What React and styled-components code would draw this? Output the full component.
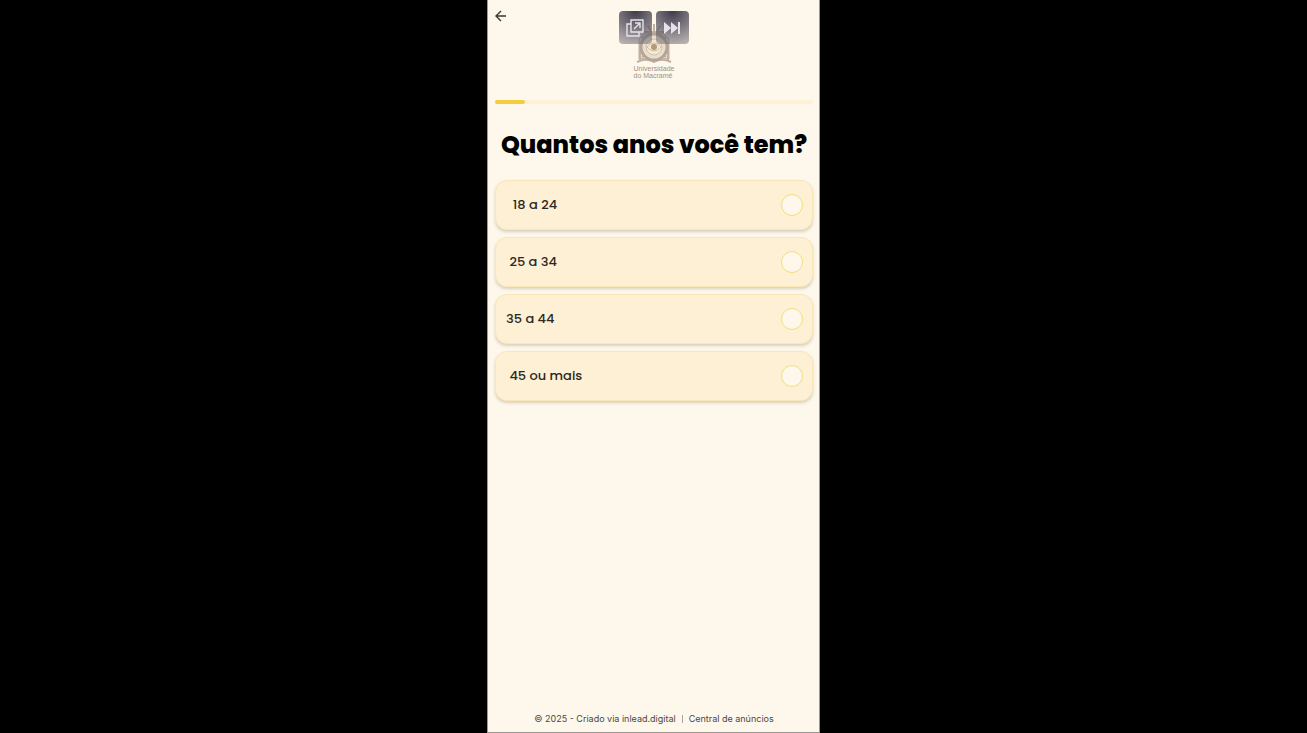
import React, { useState } from 'react';
import styled, { createGlobalStyle } from "styled-components"

const options = [
    { id: "18-24", label: "\u00a0\u00a018 a 24" },
    { id: "25-34", label: "\u00a025 a 34" },
    { id: "35-44", label: "35 a 44" },
    { id: "45", label: "\u00a045 ou mais" },
]

function Logo() {
    return (
        <LogoBox>
            <svg width="42" height="42" viewBox="0 0 42 42" fill="none" stroke="#c3b19f" aria-hidden="true">
                <path d="M21 1v8M15 3l3 5M27 3l-3 5M11 9h20" strokeWidth="2" />
                <path d="M6 16l6-6h18l6 6v20l-7-1-8 4-8-4-7 1z" fill="#eee3d0" strokeWidth="1" />
                <path d="M7 19v18M35 19v18" strokeWidth="2" />
                <path d="M4 39c6-3 12-3 17 0 5-3 11-3 17 0" strokeWidth="2" />
                <path d="M9 34l4-3M33 34l-4-3M9 14l4 3M33 14l-4 3" strokeWidth="2" />
                <circle cx="21" cy="24" r="13" fill="#eadfce" stroke="#b5a597" strokeWidth="3" />
                <circle cx="21" cy="24" r="8" fill="#f3e8d3" stroke="#d3c1a8" strokeWidth="1" />
                <path d="M14 24c4-5 10-5 14 0-4 5-10 5-14 0z" stroke="#d3c1a8" strokeWidth="1" />
                <circle cx="21" cy="24" r="3" fill="#b29a76" stroke="none" />
            </svg>
            <LogoName>Universidade<br />do Macramê</LogoName>
        </LogoBox>
    )
}

function App() {
    const [age, setAge] = useState("")

    return (<>
        <GlobalStyle />
        <Page>
            <Screen>
                <Header>
                    <BackButton type="button" aria-label="Voltar">
                        <svg width="12" height="12" viewBox="0 0 12 12" fill="none" stroke="#3a3733" strokeWidth="1.4">
                            <path d="M11 6H2M6 1L1 6l5 5" />
                        </svg>
                    </BackButton>
                    <Logo />
                </Header>
                <Progress>
                    <ProgressBar />
                </Progress>
                <Title>Quantos anos você tem?</Title>
                <Options>
                    {options.map(option => (
                        <Option key={option.id}>
                            <span>{option.label}</span>
                            <Radio
                                type="radio"
                                name="age"
                                value={option.id}
                                checked={age === option.id}
                                onChange={() => setAge(option.id)}
                            />
                        </Option>
                    ))}
                </Options>
                <Footer>
                    <span>© 2025 - Criado via inlead.digital</span>
                    <Divider />
                    <a href="#anuncios">Central de anúncios</a>
                </Footer>
                <Overlay>
                    <OverlayButton type="button" aria-label="Abrir em nova janela">
                        <svg width="18" height="18" viewBox="0 0 18 18" fill="none" stroke="#e6e3ee" strokeWidth="1.4">
                            <path d="M5 1h12v12H5zM5 5H1v12h12v-4M8 10l6-6M9 4h5v5" />
                        </svg>
                    </OverlayButton>
                    <OverlayButton type="button" aria-label="Avançar">
                        <svg width="18" height="18" viewBox="0 0 18 18" fill="#e6e3ee">
                            <path d="M1 3l7 6-7 6zM8 3l7 6-7 6zM15 3h2v12h-2z" />
                        </svg>
                    </OverlayButton>
                </Overlay>
            </Screen>
        </Page>
    </>)
}

const GlobalStyle = createGlobalStyle`
    * {
        box-sizing: border-box;
    }

    body {
        margin: 0;
        background-color: black;
        font-family: Poppins, Inter, sans-serif;
    }
`

const Page = styled.div`
    min-height: 100vh;
    display: flex;
    justify-content: center;
`

const Screen = styled.main`
    position: relative;
    width: 100%;
    max-width: 333px;
    padding: 0 6px 0 7px;
    display: flex;
    flex-direction: column;
    background-color: #fdf8eb;
    border: 1px solid #9b9891;
    border-top: none;
`

const Header = styled.header`
    display: grid;
    grid-template-columns: 1fr auto 1fr;
    align-items: start;
    height: 100px;
`

const BackButton = styled.button`
    width: 12px;
    height: 12px;
    margin-top: 10px;
    padding: 0;
    display: flex;
    border: none;
    background: none;
    cursor: pointer;
`

const LogoBox = styled.div`
    padding-top: 23px;
    display: flex;
    flex-direction: column;
    align-items: center;
`

const LogoName = styled.div`
    color: #a58f7f;
    font-family: "Liberation Sans", sans-serif;
    font-size: 7px;
    line-height: 7px;
`

const Progress = styled.div`
    height: 4px;
    border-radius: 2px;
    background-color: #fdf1d6;
`

const ProgressBar = styled.div`
    width: 30px;
    height: 100%;
    border-radius: 2px;
    background-color: #f3cd3c;
`

const Title = styled.h1`
    margin: 25px 0 19px;
    color: black;
    font-size: 24px;
    font-weight: 800;
    line-height: 32px;
    text-align: center;
    white-space: nowrap;
`

const Options = styled.div`
    display: flex;
    flex-direction: column;
    gap: 7px;
`

const Option = styled.label`
    height: 50px;
    padding: 0 9px 0 10px;
    display: flex;
    align-items: center;
    justify-content: space-between;
    border: 1px solid #f9e8b5;
    border-radius: 12px;
    background-color: #fdf0d5;
    box-shadow: 0 2px 3px rgba(120, 90, 60, 0.25);
    color: #2d2823;
    font-size: 13px;
    font-weight: 500;
    cursor: pointer;
`

const Radio = styled.input`
    appearance: none;
    width: 22px;
    height: 22px;
    margin: 0;
    border: 1px solid #f3df7c;
    border-radius: 50%;
    background-color: #fdf8eb;
    cursor: pointer;

    &:checked{
        background-color: #f3cd3c;
    }
`

const Footer = styled.footer`
    margin-top: auto;
    padding-bottom: 7px;
    display: flex;
    align-items: center;
    justify-content: center;
    color: #4a4743;
    font-family: Inter, sans-serif;
    font-size: 9px;
    font-weight: 400;
    line-height: 12px;

    a{
        color: inherit;
        text-decoration: none;
    }
`

const Divider = styled.span`
    width: 1px;
    height: 8px;
    margin: 0 6px;
    background-color: #aaa69e;
`

const Overlay = styled.div`
    position: absolute;
    top: 11px;
    left: 0;
    right: 0;
    display: flex;
    justify-content: center;
    gap: 4px;
`

const OverlayButton = styled.button`
    width: 33px;
    height: 33px;
    padding: 0;
    display: flex;
    align-items: center;
    justify-content: center;
    border: none;
    border-radius: 4px;
    background: radial-gradient(circle at 50% 0, rgba(52, 47, 66, 0.95), rgba(130, 125, 130, 0.5) 100%);
    cursor: pointer;
`

export default App
